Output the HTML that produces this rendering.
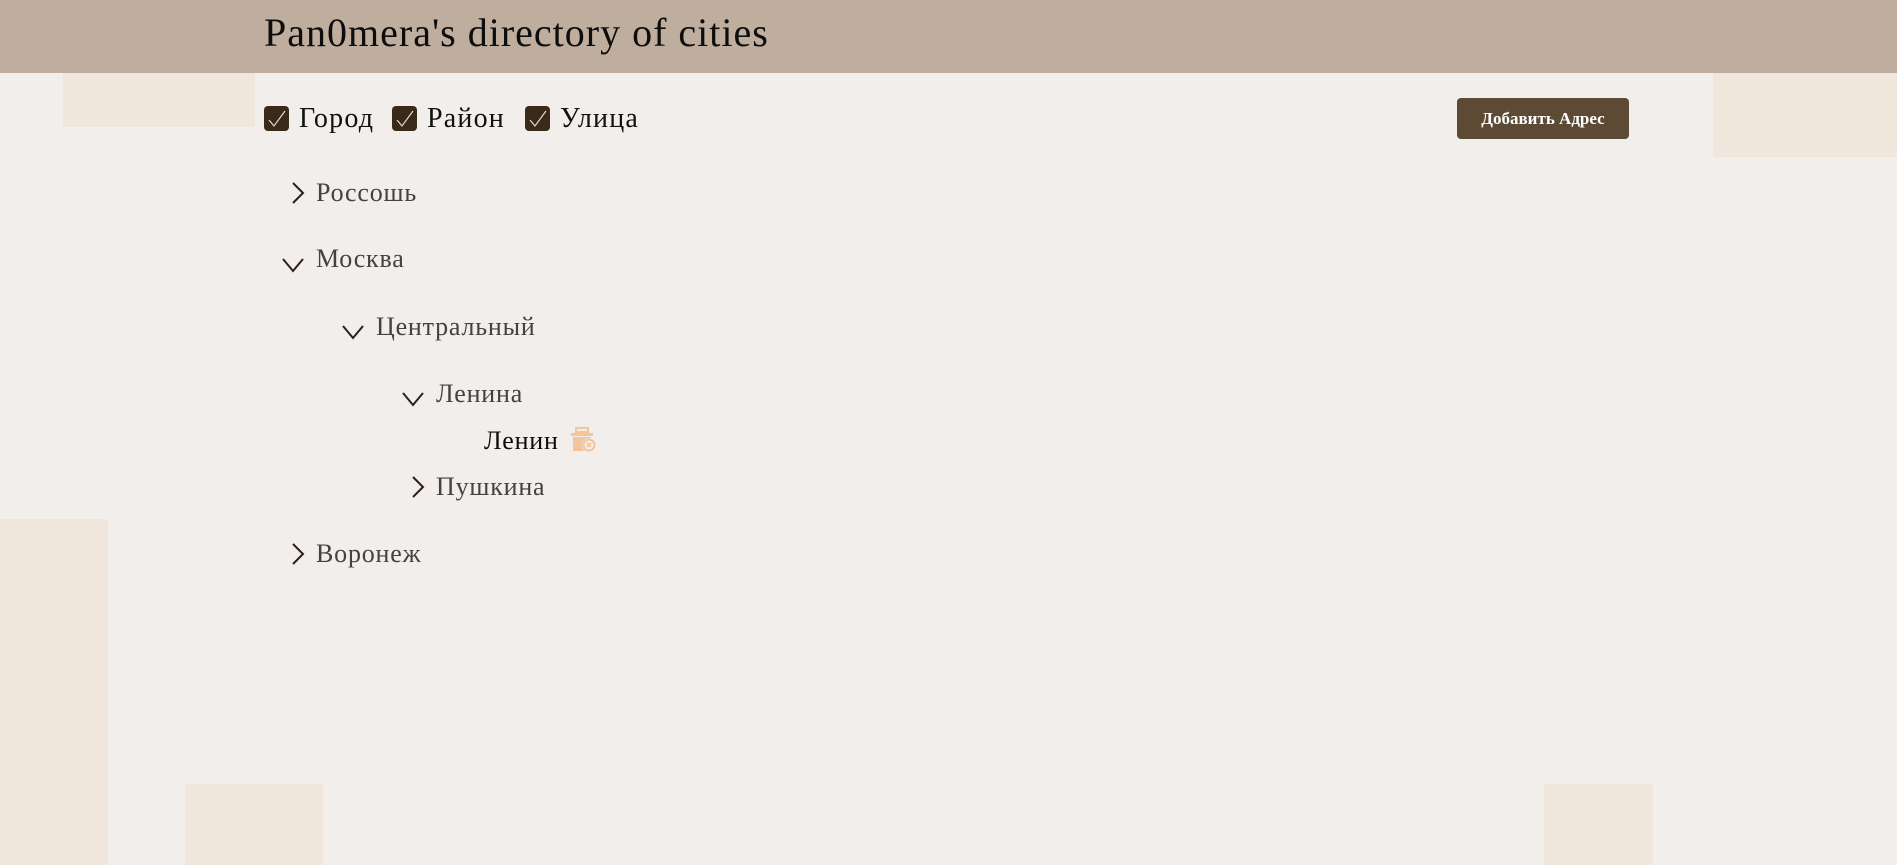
<!DOCTYPE html>
<html><head><meta charset="utf-8"><style>
*{margin:0;padding:0;box-sizing:border-box}
html,body{width:1897px;height:865px;overflow:hidden;background:#f2eeeb;font-family:"Liberation Serif","DejaVu Serif",serif;position:relative}
.a{position:absolute}
.d{position:absolute;background:#f0e6dc}
.t{position:absolute;font-size:26px;line-height:26px;letter-spacing:0.8px;color:#46413c;white-space:nowrap}
.cb{position:absolute;top:106px;width:25px;height:25px;background:#3a2a1a;border-radius:4px}
.lb{position:absolute;top:105px;font-size:28px;line-height:28px;letter-spacing:1.2px;color:#111;white-space:nowrap}
svg{position:absolute;overflow:visible}
</style></head><body>
<div class="a" style="left:0;top:0;width:1897px;height:73px;background:#bfae9e"></div>
<div class="a" style="left:264px;top:13px;font-size:40px;line-height:40px;letter-spacing:1px;color:#0d0d0d;white-space:nowrap">Pan0mera's directory of cities</div>

<div class="d" style="left:63px;top:73px;width:192px;height:54px"></div>
<div class="d" style="left:1713px;top:73px;width:184px;height:84px"></div>
<div class="d" style="left:0;top:519px;width:108px;height:346px"></div>
<div class="d" style="left:185px;top:784px;width:138px;height:81px"></div>
<div class="d" style="left:1544px;top:784px;width:109px;height:81px"></div>

<div class="cb" style="left:264px"><svg width="25" height="25" style="left:0;top:0"><path d="M5 14 L10 20 L21 5" stroke="#e8e0d8" stroke-width="1.1" fill="none"/></svg></div>
<div class="lb" style="left:299px">Город</div>
<div class="cb" style="left:392px"><svg width="25" height="25" style="left:0;top:0"><path d="M5 14 L10 20 L21 5" stroke="#e8e0d8" stroke-width="1.1" fill="none"/></svg></div>
<div class="lb" style="left:427px">Район</div>
<div class="cb" style="left:525px"><svg width="25" height="25" style="left:0;top:0"><path d="M5 14 L10 20 L21 5" stroke="#e8e0d8" stroke-width="1.1" fill="none"/></svg></div>
<div class="lb" style="left:560px">Улица</div>

<div class="a" style="left:1457px;top:98px;width:172px;height:41px;background:#5c4a35;border-radius:4px;color:#fff;font-weight:bold;font-size:17px;line-height:41px;text-align:center">Добавить Адрес</div>

<svg width="12" height="22" style="left:292px;top:182px"><path d="M1 1 L11 11 L1 21" stroke="#2a2018" stroke-width="2" fill="none"/></svg>
<div class="t" style="left:316px;top:180px">Россошь</div>

<svg width="22" height="14" style="left:282px;top:258px"><path d="M1 1 L11 13 L21 1" stroke="#2a2018" stroke-width="2" fill="none"/></svg>
<div class="t" style="left:316px;top:246px">Москва</div>

<svg width="22" height="14" style="left:342px;top:325px"><path d="M1 1 L11 13 L21 1" stroke="#2a2018" stroke-width="2" fill="none"/></svg>
<div class="t" style="left:376px;top:314px">Центральный</div>

<svg width="22" height="14" style="left:402px;top:392px"><path d="M1 1 L11 13 L21 1" stroke="#2a2018" stroke-width="2" fill="none"/></svg>
<div class="t" style="left:436px;top:381px">Ленина</div>

<div class="t" style="left:484px;top:428px;color:#0d0d0d">Ленин</div>
<svg width="26" height="26" style="left:571px;top:428px">
<rect x="5" y="0" width="12" height="4" fill="none" stroke="#f4c49a" stroke-width="2"/>
<rect x="0" y="5" width="22" height="3" fill="#f4c49a"/>
<rect x="2" y="9" width="18" height="14" fill="#f4c49a"/>
<circle cx="18" cy="17" r="7" fill="#f2eeeb"/>
<circle cx="18" cy="17" r="5.5" fill="none" stroke="#f4c49a" stroke-width="2"/>
<path d="M16 15 L20 19 M20 15 L16 19" stroke="#f4c49a" stroke-width="1.8"/>
</svg>

<svg width="12" height="22" style="left:412px;top:476px"><path d="M1 1 L11 11 L1 21" stroke="#2a2018" stroke-width="2" fill="none"/></svg>
<div class="t" style="left:436px;top:474px">Пушкина</div>

<svg width="12" height="22" style="left:292px;top:543px"><path d="M1 1 L11 11 L1 21" stroke="#2a2018" stroke-width="2" fill="none"/></svg>
<div class="t" style="left:316px;top:541px">Воронеж</div>
</body></html>
